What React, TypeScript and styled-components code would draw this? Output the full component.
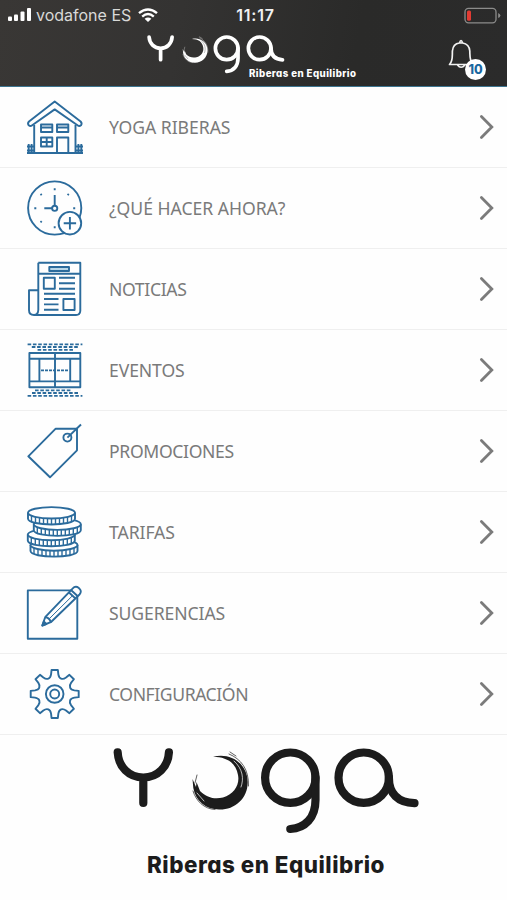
import React from 'react';
import styled, { createGlobalStyle } from 'styled-components';

const GlobalStyle = createGlobalStyle`
  * { box-sizing: border-box; }
  body { margin: 0; background: #fff; }
`;

const Screen = styled.div`
  width: 507px;
  height: 900px;
  display: flex;
  flex-direction: column;
  overflow: hidden;
  background: #fefefe;
`;

const Header = styled.header`
  height: 87px;
  flex: none;
  background: linear-gradient(100deg, #393735 0%, #343332 35%, #2a2a29 70%, #2b2b2b 100%);
  border-bottom: 1.5px solid #3d7590;
`;

const StatusBar = styled.div`
  height: 30px;
  display: grid;
  grid-template-columns: 1fr auto 1fr;
  align-items: center;
  padding: 0 6px 0 8px;
  font-family: Inter, sans-serif;
  color: #fff;
`;

const Carrier = styled.div`
  display: flex;
  align-items: center;
  gap: 5px;
`;

const CarrierName = styled.span`
  font-size: 16px;
  line-height: 20px;
  color: #d9d9d8;
  width: 97px;
  white-space: nowrap;
`;

const Clock = styled.span`
  padding-left: 2px;
  font-size: 16px;
  font-weight: 600;
  letter-spacing: 0.8px;
  color: #f1f1f1;
`;

const BatterySlot = styled.div`
  display: flex;
  justify-content: flex-end;
`;

const BrandBar = styled.div`
  height: 56px;
  display: flex;
  justify-content: space-between;
  padding: 5px 20px 0 147px;
`;

const HeaderBrand = styled.div`
  display: flex;
  flex-direction: column;
  width: 212px;
`;

const Tagline = styled.div<{ $size: number; $color: string; $tracking: number }>`
  font-family: Inter, Lato, sans-serif;
  font-feature-settings: 'cv11' 1;
  font-weight: 800;
  font-size: ${p => p.$size}px;
  line-height: ${p => p.$size * 1.2}px;
  letter-spacing: ${p => p.$tracking}px;
  color: ${p => p.$color};
  white-space: nowrap;
`;

const HeaderTagline = styled(Tagline)`
  margin: -6px 0 0 102px;
`;

const BellButton = styled.button`
  position: relative;
  width: 40px;
  height: 46px;
  padding: 0;
  border: 0;
  background: none;
`;

const Badge = styled.span`
  position: absolute;
  left: 18px;
  top: 24px;
  width: 21px;
  height: 21px;
  border-radius: 50%;
  background: #fff;
  color: #1b67a0;
  font: 800 12.5px/21px Inter, sans-serif;
  text-align: center;
`;

const Menu = styled.nav`
  display: flex;
  flex-direction: column;
`;

const Row = styled.a`
  height: 80.95px;
  display: flex;
  align-items: center;
  padding: 0 12px 0 27px;
  border-bottom: 1px solid #efefef;
`;

const Label = styled.span<{ $tracking: number }>`
  flex: 1;
  margin-left: 26px;
  font-family: 'Noto Sans', sans-serif;
  font-size: 17.6px;
  line-height: 24px;
  letter-spacing: ${p => p.$tracking}px;
  color: #7a7a7a;
  white-space: nowrap;
`;

const LineIcon = styled.svg`
  width: 56px;
  height: 56px;
  flex: none;
  overflow: visible;
  fill: none;
  stroke: #2b6b9c;
  stroke-width: 1.9;
  stroke-linejoin: round;
`;

const Footer = styled.footer`
  flex: 1;
  display: flex;
  flex-direction: column;
  align-items: center;
  padding: 13px 0 0 25px;
`;

const FooterTagline = styled(Tagline)`
  margin: 18px 0 0 0;
`;

const YogaLogo = ({ color, width }: { color: string; width: number }) => (
  <svg width={width} height={(width * 86) / 307} viewBox="0 0 307 86" fill="none" stroke={color} strokeWidth="8.2" strokeLinecap="round" role="img" aria-label="Yoga">
    <path d="M4.7 4.4C5.5 19 16 29.5 30.3 29.5S55 19 55.9 4.4M30.3 29.5V55" />
    <path
      d="M100 8.8C118 4 134.5 16 134.7 34C134.8 51 121 62 106 61.5C93 61 83 54 80.3 40L79.5 31L83 39L83.5 34L87 43C94 50 102 51.5 110 49.5C121 46 127 37 125 27C123 15 114 9 100 8.8Z"
      fill={color}
      stroke="none"
    />
    <path d="M116 6C128 11 136 21 135.5 38M80 43C83 53 91 61 102 61.5M82 35L84 27M117 4L123 8" strokeWidth="0.7" />
    <path d="M121 13C130 21 131 31 128 39M84 45L91 53" stroke={color === '#fff' ? '#333' : '#fff'} strokeWidth="0.7" />
    <circle cx="177.3" cy="29.7" r="25.2" />
    <path d="M202.5 29.7V52C202.5 70 192 80 177.3 81" />
    <circle cx="250.7" cy="29.7" r="25.2" />
    <path d="M275.9 29.7C275.9 46 285 54.5 301.5 55.2" />
  </svg>
);

const HouseIcon = () => (
  <LineIcon viewBox="0 0 56 56">
    <path d="M27.7 2.5L2 22.5Q.2 24.5 1.7 26.3Q3.4 27.6 5.2 26.2L27.7 10.4L50.5 26.2Q52.3 27.6 54 26.3Q55.4 24.5 53.6 22.5Z" />
    <path d="M7.2 26V54H48.5V26M30 54V38.5H41.3V54M14 25.5H25.3V33H14ZM30 25.5H41.3V33H30ZM14 28.5H25.3M30 28.5H41.3M14 38.5H25.3V47.5H14ZM19.7 38.5V47.5M14 43H25.3" />
    <path d="M0 47.5H7M0 51.5H7M1.7 45V55M4.6 45V55M49 47.5H56M49 51.5H56M51.4 45V55M54.3 45V55M0 54H7M49 54H56" />
  </LineIcon>
);

const ClockPlusIcon = () => (
  <LineIcon viewBox="0 0 56 56">
    <circle cx="27.7" cy="28" r="26.6" />
    <circle cx="27.7" cy="28.3" r="2.6" />
    <path d="M27.7 15V25.7M17.3 28.3H25" />
    <path d="M27.7 8.3V10.3M40.6 15.2L41.8 14M46.2 28.3H48.2M13.5 14L14.7 15.2M7.3 28.3H9.3M13.5 42.3L14.7 41.1M27.7 46.3V48.3" />
    <circle cx="42.9" cy="43.2" r="11.3" fill="#fff" />
    <path d="M42.9 37V49.4M36.7 43.2H49.1" />
  </LineIcon>
);

const NewsIcon = () => (
  <LineIcon viewBox="0 0 56 56">
    <path d="M11.3 1.7H53.3V50Q53 54 49 54H7Q2 54 2 49V29.3H11.3M11.3 1.7V49Q11 54 7 54M11.3 12.7H53.3" />
    <path d="M22.3 6H42V10H22.3Z" fill="#b9d7e8" />
    <path d="M16.8 16.8H27.8V27.8H16.8ZM36.4 38H47.6V49H36.4ZM32 16.8H48M32 22.3H48M32 27.8H48M17 32.8H48M17 38H31.5M17 43.4H31.5M17 48.8H31.5" />
  </LineIcon>
);

const CourtIcon = () => (
  <LineIcon viewBox="0 0 56 56">
    <path d="M2.4 11H53.3V45.2H2.4ZM2.4 16.8H53.3M2.4 39.4H53.3M28 11V45.2M12.4 16.8V39.4M43.2 16.8V39.4" />
    <path d="M14 28.4H42" strokeDasharray="3 1" />
    <path d="M.6 2.3H55.4M4.8 5H51.2M10.6 7.8H47.4M8 48.3H45M5 51H51M.6 53.8H55.4" strokeWidth="1.8" strokeDasharray="3.6 1.7" />
  </LineIcon>
);

const TagIcon = () => (
  <LineIcon viewBox="0 0 56 56">
    <path d="M28.7 5.7H50V27.3L23 54.3L1.3 33.3Z" />
    <circle cx="40.4" cy="14.6" r="4" />
    <path d="M40.4 14.6L54 1.5" />
  </LineIcon>
);

const COINS = [
  { cx: 27, cy: 41 },
  { cx: 24.3, cy: 30.6 },
  { cx: 30.3, cy: 20.2 },
  { cx: 24.5, cy: 8.8 },
];
const TICKS = [-20, -16, -12, -8, -4, 0, 4, 8, 12, 16, 20];

const CoinsIcon = () => (
  <LineIcon viewBox="0 0 56 56">
    {COINS.map(({ cx, cy }) => (
      <g key={cy}>
        <path d={`M${cx - 23.5} ${cy}V${cy + 6}C${cx - 23} ${cy + 13.5} ${cx + 23} ${cy + 13.5} ${cx + 23.5} ${cy + 6}V${cy}`} fill="#fff" />
        <ellipse cx={cx} cy={cy} rx="23.5" ry="5.7" fill="#fff" />
        <path
          d={TICKS.map(t => {
            const drop = 5.7 * Math.sqrt(1 - (t / 23.5) ** 2);
            return `M${cx + t} ${cy + drop}v6`;
          }).join('')}
          strokeWidth="1.4"
        />
      </g>
    ))}
  </LineIcon>
);

const PencilIcon = () => (
  <LineIcon viewBox="0 0 56 56">
    <path d="M.8 5.4H50.3V53.8H.8Z" />
    <path d="M15.3 40.5L18.2 32.2L45.5 3.7Q48.5 .4 51.8 3Q55.5 6.2 52.5 9.5L23.8 37.2Z" fill="#fff" />
    <path d="M18.2 32.2Q22.5 32.5 23.8 37.2M42 7.5L48.5 13.5M44.2 5.2L50.8 11.3" />
    <path d="M22.5 33.5L45 11.2" strokeWidth="1" />
    <path d="M15.3 40.5L16.8 36.5L19.3 39Z" fill="#2b6b9c" />
  </LineIcon>
);

const polar = (r: number, deg: number) => {
  const a = (deg * Math.PI) / 180;
  return `${(27.7 + r * Math.sin(a)).toFixed(2)} ${(28 - r * Math.cos(a)).toFixed(2)}`;
};
const GEAR =
  Array.from({ length: 8 }, (_, k) => {
    const a = k * 45;
    return `${k ? 'L' : 'M'}${polar(24.2, a - 7.5)}L${polar(24.2, a + 7.5)}L${polar(20, a + 10.5)}C${polar(15.8, a + 16)} ${polar(15.8, a + 29)} ${polar(20, a + 34.5)}`;
  }).join('') + 'Z';

const GearIcon = () => (
  <LineIcon viewBox="0 0 56 56">
    <path d={GEAR} />
    <circle cx="27.7" cy="28" r="8.8" />
    <circle cx="27.7" cy="28" r="4.5" />
  </LineIcon>
);

const Chevron = () => (
  <svg width="16" height="26" viewBox="0 0 16 26" fill="none" stroke="#7b7b7b" strokeWidth="2.8" strokeLinecap="round">
    <path d="M2.4 2.6L12.8 13L2.4 23.4" />
  </svg>
);

const ITEMS = [
  { label: 'YOGA RIBERAS', Icon: HouseIcon, tracking: -0.04 },
  { label: '¿QUÉ HACER AHORA?', Icon: ClockPlusIcon, tracking: -0.02 },
  { label: 'NOTICIAS', Icon: NewsIcon, tracking: -0.36 },
  { label: 'EVENTOS', Icon: CourtIcon, tracking: -0.1 },
  { label: 'PROMOCIONES', Icon: TagIcon, tracking: -0.35 },
  { label: 'TARIFAS', Icon: CoinsIcon, tracking: -0.08 },
  { label: 'SUGERENCIAS', Icon: PencilIcon, tracking: -0.1 },
  { label: 'CONFIGURACIÓN', Icon: GearIcon, tracking: -0.43 },
];

export default function App() {
  return (
    <Screen>
      <GlobalStyle />
      <Header>
        <StatusBar>
          <Carrier>
            <svg width="23" height="14" viewBox="0 0 23 14" fill="#fff">
              <rect x="0" y="8.5" width="4" height="4.5" rx="1" />
              <rect x="6" y="6.5" width="4" height="6.5" rx="1" />
              <rect x="12.5" y="3.5" width="4" height="9.5" rx="1" />
              <rect x="19" y="0" width="4" height="13" rx="1" />
            </svg>
            <CarrierName>vodafone ES</CarrierName>
            <svg width="20" height="15" viewBox="0 0 20 15" fill="none" stroke="#fff" strokeWidth="2.4">
              <path d="M1 5.2Q10 -2.4 19 5.2M4.2 8.6Q10 3.6 15.8 8.6" />
              <path d="M10 14L6.6 10.8Q10 8 13.4 10.8Z" fill="#fff" stroke="none" />
            </svg>
          </Carrier>
          <Clock>11:17</Clock>
          <BatterySlot>
            <svg width="37" height="17" viewBox="0 0 37 17" fill="none" stroke="#8c8c8b" strokeWidth="1.3">
              <rect x="1" y="1.4" width="31" height="14.4" rx="3.5" />
              <path d="M34.2 6V11Q36.4 10 36.4 8.5T34.2 6Z" fill="#8c8c8b" stroke="none" />
              <rect x="3" y="3.4" width="4" height="10.4" rx="1.5" fill="#e23b33" stroke="none" />
            </svg>
          </BatterySlot>
        </StatusBar>
        <BrandBar>
          <HeaderBrand>
            <YogaLogo color="#fff" width={138} />
            <HeaderTagline $size={9.7} $color="#fff" $tracking={0.43}>Riberas en Equilibrio</HeaderTagline>
          </HeaderBrand>
          <BellButton aria-label="Notificaciones">
            <svg width="40" height="46" viewBox="0 0 40 46" fill="none" stroke="#f2f2f2" strokeWidth="1.7" strokeLinejoin="round">
              <path d="M2.5 29.5C6 26 5.2 22 5.4 16C5.8 11 9 8.4 12.5 8H15.5C19.5 8.6 22.4 11 22.8 16C23 22 22.5 26 26 29.5ZM12.5 8Q14 3 15.6 8M10.5 30Q14 34.5 18 30" />
            </svg>
            <Badge>10</Badge>
          </BellButton>
        </BrandBar>
      </Header>
      <Menu>
        {ITEMS.map(({ label, Icon, tracking }) => (
          <Row key={label}>
            <Icon />
            <Label $tracking={tracking}>{label}</Label>
            <Chevron />
          </Row>
        ))}
      </Menu>
      <Footer>
        <YogaLogo color="#1c1c1c" width={307} />
        <FooterTagline $size={22.4} $color="#1c1c1c" $tracking={0.5}>Riberas en Equilibrio</FooterTagline>
      </Footer>
    </Screen>
  );
}
